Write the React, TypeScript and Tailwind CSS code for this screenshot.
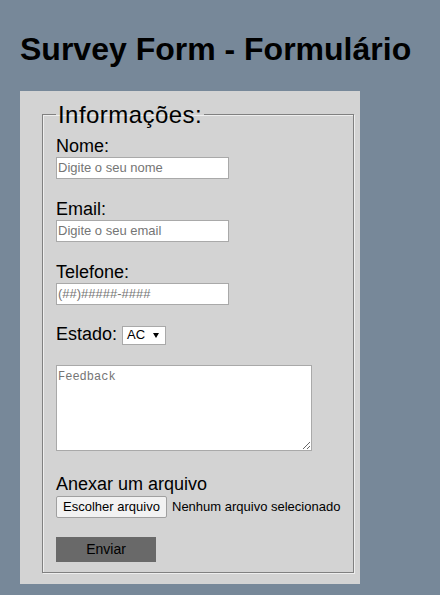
import React from "react";

export default function App() {
  return (
    <div className="min-h-[595px] bg-[#778899] px-5 pt-[31px] font-['Liberation_Sans',Arial,sans-serif] text-black">
      <h1 className="text-[32px] font-bold leading-[37px]">Survey Form - Formulário</h1>
      <form
        className="mt-[23px] w-[340px] bg-[#d3d3d3] pb-[11px] pl-[22px] pt-[10px]"
        onSubmit={(e) => e.preventDefault()}
      >
        <fieldset className="w-[307px] border border-[#808080] px-[13px] pb-[10px] pt-[7px] shadow-[inset_1px_1px_0_#eeeeee,1px_1px_0_#eeeeee]">
          <legend className="px-[2px] text-[24px] leading-[27.6px] tracking-[0.45px]">Informações:</legend>

          <label className="block text-[18px] leading-[21px]">Nome:</label>
          <input
            type="text"
            placeholder="Digite o seu nome"
            className="block h-[22px] w-[173px] border border-[#a9a9a9] bg-white px-[1px] text-[13px] outline-none placeholder:text-[#757575]"
          />

          <label className="mt-[20px] block text-[18px] leading-[21px]">Email:</label>
          <input
            type="text"
            placeholder="Digite o seu email"
            className="block h-[22px] w-[173px] border border-[#a9a9a9] bg-white px-[1px] text-[13px] outline-none placeholder:text-[#757575]"
          />

          <label className="mt-[20px] block text-[18px] leading-[21px]">Telefone:</label>
          <input
            type="text"
            placeholder="(##)#####-####"
            className="block h-[22px] w-[173px] border border-[#a9a9a9] bg-white px-[1px] text-[13px] outline-none placeholder:text-[#757575]"
          />

          <div className="mt-[19px] flex items-start">
            <span className="text-[18px] leading-[21px]">Estado:</span>
            <span className="ml-[5px] mt-[2px] flex h-[19px] w-[44px] items-center border border-[#a9a9a9] bg-white pl-[4px] text-[13px]">
              <span>AC</span>
              <svg className="ml-auto mr-[6px]" width="6" height="5" viewBox="0 0 6 5">
                <path d="M0 0 L6 0 L3 5 Z" fill="#000" />
              </svg>
            </span>
          </div>

          <textarea
            placeholder="Feedback"
            className="mt-[20px] block h-[86px] w-[256px] border border-[#a9a9a9] bg-white py-[2px] pl-[1px] pr-[2px] font-['Liberation_Mono',monospace] text-[12px] outline-none placeholder:text-[#757575]"
          />

          <label className="mt-[23px] block text-[18px] leading-[21px]">Anexar um arquivo</label>
          <div className="mt-[1px] flex items-center whitespace-nowrap text-[13px]">
            <span className="flex h-[22px] w-[111px] shrink-0 items-center justify-center rounded-[2px] border border-[#a0a0a0] bg-[#f2f2f2]">
              Escolher arquivo
            </span>
            <span className="ml-[5px]">Nenhum arquivo selecionado</span>
          </div>

          <button
            type="submit"
            className="mt-[19px] block h-[25px] w-[100px] bg-[#696969] text-[14px] text-black"
          >
            Enviar
          </button>
        </fieldset>
      </form>
    </div>
  );
}
